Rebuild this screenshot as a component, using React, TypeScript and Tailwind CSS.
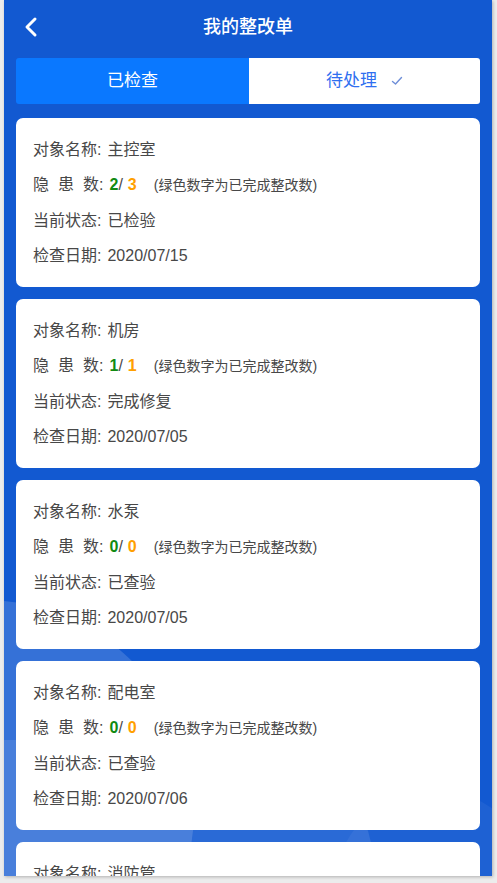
import React from 'react';

type Record = {
  name: string;
  done: number;
  total: number;
  status: string;
  date: string;
};

const records: Record[] = [
  { name: '主控室', done: 2, total: 3, status: '已检验', date: '2020/07/15' },
  { name: '机房', done: 1, total: 1, status: '完成修复', date: '2020/07/05' },
  { name: '水泵', done: 0, total: 0, status: '已查验', date: '2020/07/05' },
  { name: '配电室', done: 0, total: 0, status: '已查验', date: '2020/07/06' },
  { name: '消防管', done: 0, total: 0, status: '已查验', date: '2020/07/06' },
];

function Row({ children }: { children: React.ReactNode }) {
  return <div className="flex h-[35.5px] items-center whitespace-nowrap">{children}</div>;
}

function RecordCard({ item }: { item: Record }) {
  return (
    <div className="h-[169px] shrink-0 rounded-[7px] bg-white px-[17px] pt-[14px] text-[16px] text-[#484848]">
      <Row>
        <span>对象名称:</span>
        <span className="ml-[6px]">{item.name}</span>
      </Row>
      <Row>
        <span className="flex">
          <span>隐</span>
          <span className="ml-[9px]">患</span>
          <span className="ml-[9px]">数:</span>
        </span>
        <span className="ml-[6px] font-bold text-[#118a11]">{item.done}</span>
        <span>/</span>
        <span className="ml-[5px] font-bold text-[#ff9f00]">{item.total}</span>
        <span className="ml-[17px] text-[14px]">(绿色数字为已完成整改数)</span>
      </Row>
      <Row>
        <span>当前状态:</span>
        <span className="ml-[6px]">{item.status}</span>
      </Row>
      <Row>
        <span>检查日期:</span>
        <span className="ml-[6px]">{item.date}</span>
      </Row>
    </div>
  );
}

export default function App() {
  return (
    <div
      className="h-[883px] w-[497px] overflow-hidden bg-[#ececec] pb-[7px] pl-[4px] pr-[5px]"
      style={{ fontFamily: '"Liberation Sans", "Noto Sans CJK SC", sans-serif' }}
    >
      <div className="relative flex h-[876px] flex-col overflow-hidden bg-[#1259d1] shadow-[1px_1px_3px_rgba(0,0,0,0.25)]">
        {/* soft background shapes */}
        <div className="absolute left-[-230px] top-[600px] h-[420px] w-[420px] rounded-full bg-white/15" />
        <div className="absolute left-[-150px] top-[740px] h-[260px] w-[520px] rounded-full bg-white/10" />
        <div className="absolute left-[330px] top-[790px] h-[200px] w-[200px] rounded-full bg-white/5" />

        <header className="relative flex h-[55px] shrink-0 items-center justify-center">
          <button className="absolute left-[18px] top-[15px] text-white">
            <svg width="18" height="24" viewBox="0 0 18 24" fill="none">
              <path d="M13 4 L5 12 L13 20" stroke="currentColor" strokeWidth="3" strokeLinecap="round" strokeLinejoin="round" />
            </svg>
          </button>
          <h1 className="text-[18px] font-medium text-white">我的整改单</h1>
        </header>

        <div className="relative mx-[12px] mt-[3px] flex h-[46px] shrink-0 overflow-hidden rounded-[3px] text-[17px]">
          <div className="flex w-[233px] items-center justify-center bg-[#0a78ff] text-white">已检查</div>
          <div className="flex flex-1 items-center justify-center gap-[14px] bg-white text-[#2f6ff0]">
            <span>待处理</span>
            <svg width="12" height="10" viewBox="0 0 12 10" fill="none">
              <path d="M1.5 5.5 L4.5 8 L10.5 1.5" stroke="#6f8fd8" strokeWidth="1.4" strokeLinecap="round" strokeLinejoin="round" />
            </svg>
          </div>
        </div>

        <div className="relative mx-[12px] mt-[14px] flex flex-col gap-[12px]">
          {records.map((r, i) => (
            <RecordCard key={i} item={r} />
          ))}
        </div>
      </div>
    </div>
  );
}
